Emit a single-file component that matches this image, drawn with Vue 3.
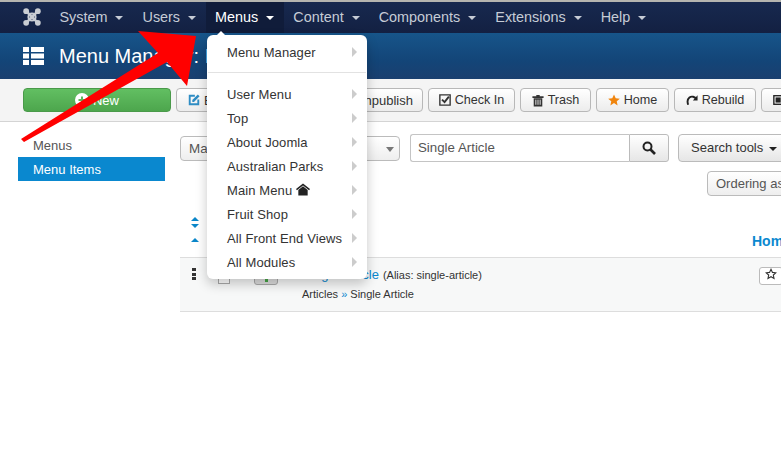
<template>
  <div class="page">
    <nav class="navbar">
      <svg class="logo" viewBox="0 0 20 20" width="18" height="18">
        <g fill="none" stroke="#c9cdd3" stroke-width="3">
          <path d="M4 4 L16 16 M16 4 L4 16" />
          <circle cx="10" cy="10" r="4" stroke-width="2.200" />
        </g>
        <g fill="#c9cdd3">
          <circle cx="3.500" cy="3.500" r="3.200" />
          <circle cx="16.500" cy="3.500" r="3.200" />
          <circle cx="3.500" cy="16.500" r="3.200" />
          <circle cx="16.500" cy="16.500" r="3.200" />
        </g>
      </svg>
      <a v-for="item in navItems" :key="item" class="nav-item" :class="{ active: item === 'Menus' }">
        {{ item }}<span class="caret"></span>
      </a>
    </nav>

    <header class="subhead">
      <svg class="list-icon" viewBox="0 0 21 18" width="21" height="18">
        <g fill="#fff">
          <rect x="0" y="0" width="6" height="5" />
          <rect x="8" y="0" width="13" height="5" />
          <rect x="0" y="6.500" width="6" height="5" />
          <rect x="8" y="6.500" width="13" height="5" />
          <rect x="0" y="13" width="6" height="5" />
          <rect x="8" y="13" width="13" height="5" />
        </g>
      </svg>
      <h1>Menu Manager: Items</h1>
    </header>

    <div class="toolbar">
      <button class="btn btn-new">
        <svg viewBox="0 0 14 14" width="14" height="14">
          <circle cx="7" cy="7" r="7" fill="#fff" />
          <path d="M7 3.500v7M3.500 7h7" stroke="#5cb85c" stroke-width="2" />
        </svg>
        New
      </button>
      <button class="btn btn-edit">
        <svg viewBox="0 0 14 14" width="12" height="12">
          <path d="M8 2H2v10h10V6.500" fill="none" stroke="#2f8dc4" stroke-width="2.200" />
          <path d="M5 9.200V7l6.500-6.500 2 2L7 9.200z" fill="#2f8dc4" />
        </svg>
        Edit
      </button>
      <button class="btn btn-unpublish">Unpublish</button>
      <button class="btn btn-check">
        <svg viewBox="0 0 14 14" width="12" height="12">
          <path d="M1 1h12v12H1z" fill="none" stroke="#333" stroke-width="1.600" />
          <path d="M3.500 6.500l3 3 5-6.500" fill="none" stroke="#333" stroke-width="2.200" />
        </svg>
        Check In
      </button>
      <button class="btn btn-trash">
        <svg viewBox="0 0 14 14" width="12" height="13">
          <path d="M0.500 2h13v2h-13zM5 0.500h4V2H5zM2 4.500h10V14H2z" fill="#333" />
          <path d="M4.500 6v6M7 6v6M9.500 6v6" stroke="#fff" stroke-width="1" />
        </svg>
        Trash
      </button>
      <button class="btn btn-home">
        <svg viewBox="0 0 14 14" width="12" height="12">
          <path d="M7 .5l2 4.400 4.800.5-3.600 3.200 1 4.700L7 10.500l-4.200 2.800 1-4.700L.2 5.400 5 4.900z" fill="#f0850e" />
        </svg>
        Home
      </button>
      <button class="btn btn-rebuild">
        <svg viewBox="0 0 14 14" width="12" height="13">
          <path d="M12 5.500C10.500 2.500 6.500 1.500 4 3.500 1.500 5.500 1.500 9 2.500 12" fill="none" stroke="#222" stroke-width="2.200" />
          <path d="M13.500 1v6h-5.500z" fill="#222" />
        </svg>
        Rebuild
      </button>
      <button class="btn btn-last">
        <svg viewBox="0 0 14 14" width="12" height="12">
          <rect x="1" y="2" width="12" height="10" fill="none" stroke="#222" stroke-width="1.600" />
          <rect x="3" y="4" width="6" height="6" fill="#222" />
        </svg>
        Batch
      </button>
    </div>

    <div class="content">
      <aside class="sidebar">
        <a class="side-link">Menus</a>
        <a class="side-link current">Menu Items</a>
      </aside>

      <main class="main">
        <div class="filters">
          <div class="select">Main Menu<span class="select-caret"></span></div>
          <div class="search">
            <div class="search-input">Single Article</div>
            <div class="search-btn">
              <svg viewBox="0 0 14 14" width="14" height="14">
                <circle cx="5.500" cy="5.500" r="4" fill="none" stroke="#222" stroke-width="2" />
                <path d="M8.500 8.500L13 13" stroke="#222" stroke-width="2.600" />
              </svg>
            </div>
          </div>
          <div class="tools-btn">Search tools <span class="tools-caret"></span></div>
        </div>

        <div class="order-row">
          <div class="order-btn">Ordering ascending</div>
        </div>

        <div class="table-head">
          <div class="sort-icons">
            <svg viewBox="0 0 8 11" width="8" height="11">
              <path d="M4 0l4 4H0zM4 11L0 7h8z" fill="#0a86c9" />
            </svg>
            <svg viewBox="0 0 8 4" width="8" height="4">
              <path d="M4 0l4 4H0z" fill="#0a86c9" />
            </svg>
          </div>
          <a class="col-home">Home</a>
        </div>

        <div class="table-row">
          <div class="drag">
            <i></i><i></i><i></i>
          </div>
          <div class="check"></div>
          <div class="status"><span class="status-dot"></span></div>
          <div class="row-title">
            <div class="line-one"><a>Single Article</a> <span>(Alias: single-article)</span></div>
            <div class="line-two">Articles <b>»</b> Single Article</div>
          </div>
          <div class="home-star">
            <svg viewBox="0 0 14 14" width="12" height="12">
              <path d="M7 1.500l1.700 3.600 3.900.5-2.900 2.600.8 3.900L7 10.200l-3.500 1.900.8-3.900L1.400 5.600l3.900-.5z" fill="none" stroke="#333" stroke-width="1.300" />
            </svg>
          </div>
        </div>
      </main>
    </div>

    <!-- dropdown sits over the page -->
    <div class="dropdown">
      <span class="notch"></span>
      <div class="dd-item">Menu Manager<span class="dd-arrow"></span></div>
      <div class="dd-divider"></div>
      <div v-for="m in menuItems" :key="m" class="dd-item">
        <span>{{ m }}
          <svg v-if="m === 'Main Menu'" class="dd-home" viewBox="0 0 15 13" width="14" height="13">
            <path d="M7.500 0L15 6l-1 1.200-6.500-5L1 7.200 0 6z M2.500 7l5-4 5 4v6h-10z" fill="#222" />
          </svg>
        </span>
        <span class="dd-arrow"></span>
      </div>
    </div>

    <!-- red annotation arrow -->
    <svg class="annotation" viewBox="0 0 781 465" width="781" height="465">
      <path d="M138 31L196 36L187 86L167 62L24 142L21 139L158 53Z" fill="#f00" />
    </svg>
  </div>
</template>

<script setup>
const navItems = ['System', 'Users', 'Menus', 'Content', 'Components', 'Extensions', 'Help']
const menuItems = ['User Menu', 'Top', 'About Joomla', 'Australian Parks', 'Main Menu', 'Fruit Shop', 'All Front End Views', 'All Modules']
</script>

<style>
html, body { background: #fff; overflow: hidden; }
</style>

<style scoped>
.page {
  position: relative;
  width: 781px;
  height: 465px;
  overflow: hidden;
  background: #fff;
  font-family: "Liberation Sans", Arial, sans-serif;
  font-size: 13px;
  color: #333;
}

.navbar {
  height: 31px;
  border-top: 2px solid #b5b5b0;
  background: linear-gradient(#17294f, #132042);
  display: flex;
  align-items: center;
  padding-left: 22.500px;
}
.logo { margin-right: 9.500px; margin-top: -1px; }
.nav-item {
  height: 31px;
  box-sizing: border-box;
  padding: 0 9.500px 2px;
  display: flex;
  align-items: center;
  font-size: 14.400px;
  color: #c6ccd6;
}
.nav-item.active {
  color: #fff;
  background: #101c3a;
}
.caret {
  display: inline-block;
  margin-left: 8px;
  margin-top: 2px;
  border-left: 4px solid transparent;
  border-right: 4px solid transparent;
  border-top: 4px solid currentColor;
}

.subhead {
  height: 46px;
  background: linear-gradient(#17558a, #134578 60%, #1a3f6f);
  display: flex;
  align-items: center;
  padding-left: 23px;
}
.list-icon { margin-right: 15px; }
.subhead h1 {
  margin: 0;
  font-size: 20px;
  font-weight: normal;
  color: #fff;
}

.toolbar {
  height: 43px;
  box-sizing: border-box;
  background: #f4f4f4;
  border-bottom: 1px solid #d4d4d4;
  display: flex;
  gap: 5px;
  padding: 9px 0 0 23px;
}
.btn {
  height: 24px;
  box-sizing: border-box;
  padding: 0 9px;
  display: flex;
  align-items: center;
  justify-content: center;
  gap: 4px;
  font: 12.600px "Liberation Sans", Arial, sans-serif;
  color: #333;
  background: linear-gradient(#fff, #ececec);
  border: 1px solid #b8b8b8;
  border-radius: 4px;
  white-space: nowrap;
  flex: none;
}
.btn-new {
  width: 148px;
  font-size: 13px;
  color: #fff;
  background: linear-gradient(#62bf62, #4da64d);
  border-color: #4a9a4a;
}
.btn-edit { width: 70px; justify-content: flex-start; padding-left: 11px; font-size: 13px; }
.btn-unpublish { width: 172px; justify-content: flex-end; padding-right: 9px; font-size: 13px; }
.btn-check { width: 87px; }
.btn-trash { width: 71px; }
.btn-home { width: 73px; }
.btn-rebuild { width: 82px; }
.btn-last { padding-left: 11px; }

.content { display: flex; }
.sidebar {
  width: 147px;
  margin: 11px 15px 0 18px;
  flex: none;
}
.side-link {
  display: block;
  height: 24px;
  line-height: 25px;
  padding-left: 15px;
  color: #555;
  font-size: 13px;
}
.side-link.current {
  background: #0a88cf;
  color: #fff;
}

.main { flex: 1; min-width: 0; padding-top: 12px; }
.filters {
  display: flex;
  align-items: center;
  height: 28px;
  white-space: nowrap;
}
.select {
  width: 220px;
  height: 25px;
  box-sizing: border-box;
  line-height: 23px;
  padding-left: 8px;
  border: 1px solid #bbb;
  border-radius: 4px;
  background: linear-gradient(#fff, #eee);
  position: relative;
  margin-right: 10px;
  color: #555;
  font-size: 13.400px;
  flex: none;
}
.select-caret {
  position: absolute;
  right: 5px;
  top: 10px;
  border-left: 4px solid transparent;
  border-right: 4px solid transparent;
  border-top: 5px solid #777;
}
.search { display: flex; flex: none; margin-right: 9px; }
.search-input {
  width: 219px;
  height: 28px;
  box-sizing: border-box;
  line-height: 25px;
  padding-left: 7px;
  border: 1px solid #c4c4c4;
  border-right: none;
  border-radius: 3px 0 0 3px;
  color: #555;
  font-size: 13.300px;
}
.search-btn {
  width: 40px;
  height: 28px;
  box-sizing: border-box;
  border: 1px solid #bbb;
  border-radius: 0 3px 3px 0;
  background: linear-gradient(#fff, #e6e6e6);
  display: flex;
  align-items: center;
  justify-content: center;
}
.tools-btn {
  height: 28px;
  box-sizing: border-box;
  line-height: 25px;
  padding: 0 12px;
  border: 1px solid #bbb;
  border-radius: 4px;
  background: linear-gradient(#fff, #e6e6e6);
  font-size: 13px;
  flex: none;
}
.tools-caret {
  display: inline-block;
  vertical-align: middle;
  margin-left: 2px;
  border-left: 4px solid transparent;
  border-right: 4px solid transparent;
  border-top: 4px solid #222;
}
.order-row { height: 25px; margin-top: 9px; padding-left: 527px; white-space: nowrap; }
.order-btn {
  display: inline-block;
  height: 25px;
  box-sizing: border-box;
  line-height: 23px;
  padding: 0 8px;
  border: 1px solid #bbb;
  border-radius: 4px;
  background: linear-gradient(#fff, #eee);
  font-size: 13px;
  color: #555;
}

.table-head {
  height: 62px;
  box-sizing: border-box;
  border-bottom: 1px solid #ddd;
  position: relative;
  white-space: nowrap;
}
.sort-icons {
  position: absolute;
  left: 11px;
  top: 21px;
  display: flex;
  flex-direction: column;
  gap: 10px;
}
.col-home {
  position: absolute;
  left: 572px;
  top: 37px;
  font-weight: bold;
  font-size: 14px;
  color: #0a88cf;
}
.table-row {
  height: 54px;
  box-sizing: border-box;
  background: #f7f8f8;
  border-bottom: 1px solid #ddd;
  display: flex;
  white-space: nowrap;
}
.drag {
  width: 5px;
  margin: 10px 0 0 12px;
  display: flex;
  flex-direction: column;
  gap: 1.500px;
  flex: none;
}
.drag i { display: block; width: 4px; height: 3px; background: #333; }
.check {
  width: 12px;
  height: 13px;
  box-sizing: border-box;
  margin: 13px 0 0 21px;
  background: #fff;
  border: 1px solid #aaa;
  flex: none;
}
.status {
  width: 24px;
  height: 15px;
  box-sizing: border-box;
  margin: 12px 0 0 24px;
  background: #ddd;
  border: 1px solid #aaa;
  border-radius: 3px;
  flex: none;
  display: flex;
  justify-content: center;
  align-items: flex-end;
}
.status-dot { width: 3px; height: 3px; margin-bottom: 2px; background: #46a546; }
.row-title { margin-left: 24px; width: 457px; flex: none; }
.line-one { margin-top: 9px; font-size: 13px; }
.line-one a { color: #0a88cf; letter-spacing: 0.150px; }
.line-one span { font-size: 11px; color: #333; }
.line-two { margin-top: 6px; font-size: 11px; color: #333; }
.line-two b { color: #0a88cf; font-weight: normal; }
.home-star {
  width: 24px;
  height: 18px;
  margin-top: 9px;
  background: #fff;
  border: 1px solid #bbb;
  border-radius: 3px;
  padding-left: 5px;
  box-sizing: border-box;
  flex: none;
}

.dropdown {
  position: absolute;
  left: 207px;
  top: 35px;
  width: 160px;
  height: 244px;
  box-sizing: border-box;
  padding-top: 5px;
  background: #fff;
  border-radius: 6px;
  box-shadow: 0 5px 12px rgba(0, 0, 0, 0.22);
  font-size: 13px;
  letter-spacing: 0.100px;
  color: #333;
}
.notch {
  position: absolute;
  left: 9px;
  top: -4px;
  border-left: 5px solid transparent;
  border-right: 5px solid transparent;
  border-bottom: 5px solid #fff;
}
.dd-item {
  height: 24px;
  display: flex;
  align-items: center;
  justify-content: space-between;
  padding: 0 10px 0 20px;
  white-space: nowrap;
}
.dd-divider {
  height: 1px;
  background: #e2e2e2;
  margin: 8px 1px 9px;
}
.dd-home { vertical-align: -1px; }
.dd-arrow {
  border-top: 5px solid transparent;
  border-bottom: 5px solid transparent;
  border-left: 5px solid #ccc;
}

.annotation {
  position: absolute;
  left: 0;
  top: 0;
  pointer-events: none;
}
</style>
